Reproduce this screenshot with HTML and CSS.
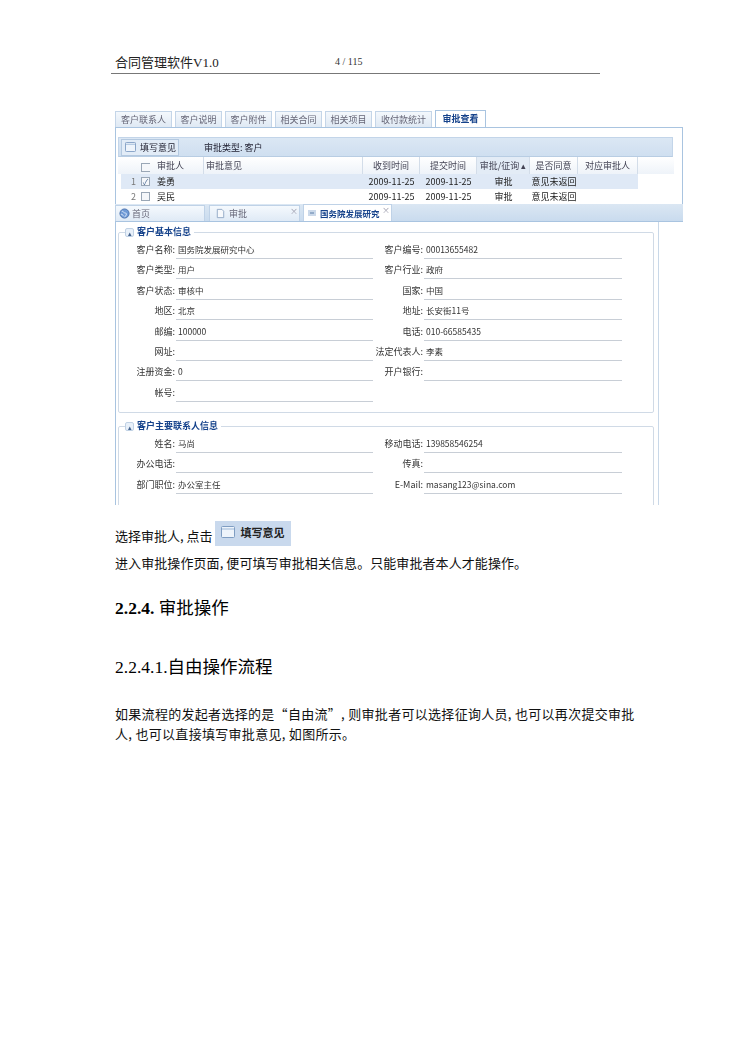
FILE: index.html
```html
<!DOCTYPE html>
<html lang="zh">
<head>
<meta charset="utf-8">
<title>合同管理软件V1.0</title>
<link rel="stylesheet" href="styles.css">
</head>
<body>
<div class="page">
  <header class="doc-head"><span class="doc-title">合同管理软件V1.0</span><span class="doc-num">4 / 115</span></header>

  <div class="shot">
    <div class="tabs">
      <span class="tab w56">客户联系人</span><span class="tab w47">客户说明</span><span class="tab w47">客户附件</span><span class="tab w47">相关合同</span><span class="tab w47">相关项目</span><span class="tab w57">收付款统计</span><span class="tab w51 on">审批查看</span>
    </div>
    <div class="panel">
      <div class="toolbar">
        <span class="tbtn"><svg class="ico" viewBox="0 0 12 11"><rect x=".5" y=".5" width="11" height="10" rx="1" fill="#eef4fb" stroke="#7f9dc2"/><path d="M1 2.5h10" stroke="#9db8d8"/></svg>填写意见</span>
        <span class="ttype">审批类型: 客户</span>
      </div>
      <div class="grow ghead">
        <span></span><span class="cb"></span><span class="pad">审批人</span><span class="pad">审批意见</span><span class="ctr">收到时间</span><span class="ctr">提交时间</span><span class="ctr sorted">审批/征询 ▴</span><span class="ctr">是否同意</span><span class="ctr">对应审批人</span>
      </div>
      <div class="grow sel">
        <span class="rn">1</span><span class="cb checked">✓</span><span class="pad">姜勇</span><span></span><span class="ctr">2009-11-25</span><span class="ctr">2009-11-25</span><span class="ctr">审批</span><span class="ctr">意见未返回</span><span></span>
      </div>
      <div class="grow">
        <span class="rn">2</span><span class="cb"></span><span class="pad">吴民</span><span></span><span class="ctr">2009-11-25</span><span class="ctr">2009-11-25</span><span class="ctr">审批</span><span class="ctr">意见未返回</span><span></span>
      </div>
    </div>

    <div class="wintabs">
      <span class="wt wt-home"><svg class="ico2" viewBox="0 0 12 12"><circle cx="6" cy="6" r="5" fill="#6f9ad6" stroke="#4a72ad"/><path d="M3 3.500c2 0 2 2 4 2s1 3-1 4.500M2 7c2-1 2 1 3 2" fill="none" stroke="#dfeafa"/></svg>首页</span>
      <span class="wt wt-appr"><svg class="ico2" viewBox="0 0 12 12"><path d="M2.500 1.500h5l2 2v7h-7z" fill="#f7f9fc" stroke="#8fa6c4"/></svg>审批<i class="x">×</i></span>
      <span class="wt wt-org"><svg class="ico3" viewBox="0 0 10 10"><rect x="1" y="2" width="8" height="6" fill="#cbd9ea"/><path d="M3 5h4" stroke="#5d7fa8"/></svg>国务院发展研究<i class="x">×</i></span>
    </div>

    <div class="formwrap">
      <fieldset class="fs fs1">
        <legend><span class="tog">▴</span>客户基本信息</legend>
        <div class="fgrid">
          <label>客户名称:</label><span class="val">国务院发展研究中心</span><label>客户编号:</label><span class="val">00013655482</span>
          <label>客户类型:</label><span class="val">用户</span><label>客户行业:</label><span class="val">政府</span>
          <label>客户状态:</label><span class="val">审核中</span><label>国家:</label><span class="val">中国</span>
          <label>地区:</label><span class="val">北京</span><label>地址:</label><span class="val">长安街11号</span>
          <label>邮编:</label><span class="val">100000</span><label>电话:</label><span class="val">010-66585435</span>
          <label>网址:</label><span class="val"></span><label>法定代表人:</label><span class="val">李素</span>
          <label>注册资金:</label><span class="val">0</span><label>开户银行:</label><span class="val"></span>
          <label>帐号:</label><span class="val"></span>
        </div>
      </fieldset>
      <fieldset class="fs fs2">
        <legend><span class="tog">▴</span>客户主要联系人信息</legend>
        <div class="fgrid">
          <label>姓名:</label><span class="val">马尚</span><label>移动电话:</label><span class="val">139858546254</span>
          <label>办公电话:</label><span class="val"></span><label>传真:</label><span class="val"></span>
          <label>部门职位:</label><span class="val">办公室主任</span><label>E-Mail:</label><span class="val">masang123@sina.com</span>
        </div>
      </fieldset>
    </div>
  </div>

  <p class="line first"><span>选择审批人, 点击</span><span class="imgbtn"><svg class="ico4" viewBox="0 0 14 12"><rect x=".5" y=".5" width="13" height="11" rx="1" fill="#eef4fb" stroke="#7f9dc2"/><path d="M1 3h12" stroke="#9db8d8"/></svg>填写意见</span></p>
  <p class="line second">进入审批操作页面, 便可填写审批相关信息。只能审批者本人才能操作。</p>

  <h2 class="h-a"><b>2.2.4.</b> 审批操作</h2>
  <h3 class="h-b">2.2.4.1.自由操作流程</h3>
  <p class="para">如果流程的发起者选择的是“自由流”, 则审批者可以选择征询人员, 也可以再次提交审批人, 也可以直接填写审批意见, 如图所示。</p>
</div>
</body>
</html>
```
FILE: styles.css
```css
* { box-sizing: border-box; }
html, body { margin: 0; padding: 0; background: #fff; }
body { font-family: "Noto Sans CJK SC", "Liberation Sans", sans-serif; color: #000; width: 750px; height: 1060px; overflow: hidden; }
.page { padding-top: 53px; }

.doc-head { margin-left: 111px; width: 489px; height: 21px; padding: 0 0 3px 4px; border-bottom: 1px solid #777; display: flex; align-items: center; font-family: "Liberation Serif", "Noto Sans CJK SC", serif; }
.doc-title { width: 220px; font-size: 13px; color: #222; }
.doc-num { font-size: 10px; color: #333; }

.shot { margin: 36px 0 0 115px; width: 568px; height: 395px; overflow: hidden; font-size: 9px; color: #333; filter: blur(.45px); }

.tabs { display: flex; gap: 3px; height: 17px; align-items: flex-end; }
.tab { height: 16px; line-height: 15px; text-align: center; border: 1px solid #c4d5e8; border-bottom: 0; background: linear-gradient(#f4f8fc, #dfe9f4); color: #667; }
.w56 { width: 57px; } .w47 { width: 47px; } .w57 { width: 57px; } .w51 { width: 51px; }
.tab.on { height: 17px; background: #fff; border-color: #a9c4e0; color: #15428b; font-weight: 700; }

.panel { height: 77px; border: 1px solid #a9c4e0; border-bottom: 0; padding: 9px 9px 0 2px; background: #fff; }
.toolbar { height: 20px; background: linear-gradient(#dbe7f4, #cfdff0); border: 1px solid #c3d5e9; border-bottom-color: #b8cde3; display: flex; align-items: center; padding-left: 2px; }
.tbtn { width: 58px; height: 17px; display: flex; align-items: center; gap: 4px; padding-left: 3px; border: 1px solid #b4c9e0; background: #e2ecf7; color: #223; }
.ico { width: 11px; height: 10px; }
.ttype { margin-left: 25px; color: #223; }

.grow { display: grid; grid-template-columns: 19px 15px 49px 159px 57px 57px 53px 48px 60px; height: 15px; width: 517px; margin-left: 3px; align-items: center; line-height: 15px; color: #222; white-space: nowrap; }
.ghead { height: 17px; line-height: 17px; color: #445; width: 556px; margin-left: 0; padding-left: 3px; background: linear-gradient(#fff, #eef3f9); }
.ghead > span { height: 17px; border-right: 1px solid #d3dde9; }
.ghead > span:first-child, .ghead > span:nth-child(2) { border-right: 0; }
.ghead .sorted { background: #e3ecf6; }
.sel { background: #dfe9f6; }
.rn { text-align: right; padding-right: 4px; color: #777; }
.pad { padding-left: 2px; }
.ctr { text-align: center; }
.cb { width: 9px; height: 9px; border: 1px solid #9aa7b6; background: #f5f7fa; font-size: 8px; line-height: 8px; text-align: center; color: #4a6a94; margin-left: 1px; display: block; }
.ghead > .cb { height: 9px; border: 1px solid #9aa7b6; margin-top: 4px; }

.wintabs { height: 18px; width: 568px; background: linear-gradient(#dbe7f3, #c9dbee); border-bottom: 1px solid #a9c4e0; display: flex; align-items: flex-end; }
.wt { height: 16px; display: flex; align-items: center; position: relative; border: 1px solid #bfd2e7; border-bottom: 0; background: linear-gradient(#f5f9fd, #dfeaf6); color: #667; }
.wt-home { width: 90px; padding-left: 3px; gap: 2px; }
.wt-appr { width: 91px; margin-left: 4px; padding-left: 5px; gap: 3px; }
.wt-org { width: 89px; margin-left: 3px; padding-left: 3px; gap: 3px; height: 17px; background: #fff; color: #15428b; font-weight: 700; font-size: 8.500px; }
.ico2 { width: 11px; height: 11px; }
.ico3 { width: 10px; height: 10px; }
.x { position: absolute; right: 1px; top: 0; font-style: normal; font-weight: 400; font-size: 8px; color: #99a; line-height: 10px; }

.formwrap { width: 544px; height: 283px; border-left: 1px solid #a9c4e0; border-right: 1px solid #c9d8e8; padding: 4px 0 0 2px; }
.fs { margin: 0; padding: 0; border: 1px solid #d0dae6; border-radius: 2px; width: 536px; min-width: 0; }
.fs1 { height: 187px; }
.fs2 { height: 100px; margin-top: 7px; }
.fs legend { margin-left: 6px; padding: 0 3px 0 0; font-size: 9px; line-height: 12px; font-weight: 700; color: #15428b; display: flex; align-items: center; gap: 3px; }
.tog { width: 9px; height: 9px; font-size: 7px; line-height: 8px; text-align: center; background: #e8f0f9; border: 1px solid #c0d1e4; border-radius: 2px; color: #44648f; font-weight: 400; }
.fgrid { display: grid; grid-template-columns: 57px 197px 51px 198px; grid-auto-rows: 20.4px; margin-top: 5px; margin-left: 0; color: #333; font-size: 8.500px; }
.fgrid label { text-align: right; font-size: 9px; line-height: 14px; white-space: nowrap; padding-right: 1px; }
.fgrid .val { height: 16px; line-height: 13px; border-bottom: 1px solid #c8ced6; padding-left: 2px; white-space: nowrap; }

.line { margin: 0 0 0 115px; font-size: 13px; color: #111; line-height: 20px; }
.first { margin-top: 16px; height: 25px; display: flex; align-items: flex-end; gap: 2px; white-space: nowrap; }
.imgbtn { display: flex; align-items: center; gap: 6px; width: 76px; height: 25px; padding: 0 0 3px 6px; background: #c9d9ed; color: #222; font-size: 11px; line-height: 14px; font-weight: 700; }
.ico4 { width: 14px; height: 12px; }
.second { margin-top: 7px; letter-spacing: .08px; }
.h-a { margin: 23px 0 0 115px; font-size: 17.500px; line-height: 24px; font-weight: 400; font-family: "Liberation Serif", "Noto Sans CJK SC", serif; }
.h-a b { font-weight: 700; }
.h-b { margin: 35px 0 0 115px; font-size: 17.500px; line-height: 24px; font-weight: 400; font-family: "Liberation Serif", "Noto Sans CJK SC", serif; }
.para { margin: 25px 0 0 115px; width: 522px; font-size: 13px; line-height: 20px; letter-spacing: .3px; color: #111; }
```
